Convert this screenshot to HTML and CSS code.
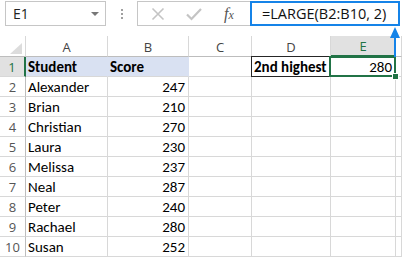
FILE: index.html
```html
<!DOCTYPE html>
<html>
<head>
    <title>LARGE formula</title>
    <link rel="stylesheet" href="styles.css">
</head>
<body>
    <div class="app">
        <div class="formula-bar">
            <div class="name-box">
                <span>E1</span>
                <span class="caret"></span>
            </div>
            <div class="grip"><i></i><i></i><i></i></div>
            <div class="fx-box">
                <svg class="icon" width="14" height="14" viewBox="0 0 14 14">
                    <path d="M1.5 1.5 L12.5 12.5 M12.5 1.5 L1.5 12.5" stroke="#c4c4c4" stroke-width="1.6" fill="none"/>
                </svg>
                <svg class="icon" width="16" height="14" viewBox="0 0 16 14">
                    <path d="M1 7.5 L5.5 12 L15 2" stroke="#c4c4c4" stroke-width="2.2" fill="none"/>
                </svg>
                <span class="fx">f<span class="fx-x">x</span></span>
            </div>
            <div class="formula">=LARGE(B2:B10, 2)</div>
        </div>

        <!-- arrow pointing from E1 to the formula box -->
        <svg class="arrow" width="12" height="31" viewBox="0 0 12 31">
            <path d="M6 1 L11 12 L1 12 Z" fill="#1583e8"/>
            <rect x="5" y="11" width="2" height="20" fill="#1583e8"/>
        </svg>

        <div class="sheet">
            <div class="hdr corner"><span class="tri"></span></div>
            <div class="hdr col">A</div>
            <div class="hdr col">B</div>
            <div class="hdr col">C</div>
            <div class="hdr col">D</div>
            <div class="hdr col active">E</div>
            <div class="hdr col"></div>

            <div class="rh active">1</div>
            <div class="cell bold band">Student</div>
            <div class="cell bold band">Score</div>
            <div class="cell"></div>
            <div class="cell bold boxed">2nd highest</div>
            <div class="cell num selected">280<span class="handle"></span></div>
            <div class="cell"></div>

            <div class="rh">2</div>
            <div class="cell">Alexander</div>
            <div class="cell num">247</div>
            <div class="cell"></div><div class="cell"></div><div class="cell"></div><div class="cell"></div>

            <div class="rh">3</div>
            <div class="cell">Brian</div>
            <div class="cell num">210</div>
            <div class="cell"></div><div class="cell"></div><div class="cell"></div><div class="cell"></div>

            <div class="rh">4</div>
            <div class="cell">Christian</div>
            <div class="cell num">270</div>
            <div class="cell"></div><div class="cell"></div><div class="cell"></div><div class="cell"></div>

            <div class="rh">5</div>
            <div class="cell">Laura</div>
            <div class="cell num">230</div>
            <div class="cell"></div><div class="cell"></div><div class="cell"></div><div class="cell"></div>

            <div class="rh">6</div>
            <div class="cell">Melissa</div>
            <div class="cell num">237</div>
            <div class="cell"></div><div class="cell"></div><div class="cell"></div><div class="cell"></div>

            <div class="rh">7</div>
            <div class="cell">Neal</div>
            <div class="cell num">287</div>
            <div class="cell"></div><div class="cell"></div><div class="cell"></div><div class="cell"></div>

            <div class="rh">8</div>
            <div class="cell">Peter</div>
            <div class="cell num">240</div>
            <div class="cell"></div><div class="cell"></div><div class="cell"></div><div class="cell"></div>

            <div class="rh">9</div>
            <div class="cell">Rachael</div>
            <div class="cell num">280</div>
            <div class="cell"></div><div class="cell"></div><div class="cell"></div><div class="cell"></div>

            <div class="rh">10</div>
            <div class="cell">Susan</div>
            <div class="cell num">252</div>
            <div class="cell"></div><div class="cell"></div><div class="cell"></div><div class="cell"></div>
        </div>
    </div>
</body>
</html>
```

FILE: styles.css
```css
body {
    margin: 0;
    background: #ffffff;
    font-family: "Open Sans", "Noto Sans", sans-serif;
}
.app {
    position: relative;
    width: 402px;
    height: 257px;
    overflow: hidden;
}
.formula-bar {
    display: flex;
    height: 26px;
    padding: 1px 0 0 5px;
    box-sizing: border-box;
}
.name-box {
    width: 101px;
    border: 1px solid #c6c6c6;
    box-sizing: border-box;
    display: flex;
    align-items: center;
    justify-content: space-between;
    padding: 0 6px 0 7px;
    font-size: 14px;
    color: #222;
}
.caret {
    width: 0;
    height: 0;
    border-left: 4px solid transparent;
    border-right: 4px solid transparent;
    border-top: 4px solid #777;
}
.grip {
    width: 31px;
    display: flex;
    flex-direction: column;
    align-items: center;
    justify-content: center;
    gap: 2px;
}
.grip i {
    width: 2px;
    height: 2px;
    background: #a0a0a0;
}
.fx-box {
    width: 113px;
    border: 1px solid #c6c6c6;
    border-right: none;
    box-sizing: border-box;
    display: flex;
    align-items: center;
    padding-left: 13px;
}
.fx-box .icon {
    margin-right: 21px;
}
.fx-box .icon + .icon {
    margin-right: 22px;
}
.fx {
    font-family: "Liberation Serif", serif;
    font-style: italic;
    font-size: 16px;
    color: #555;
}
.fx-x {
    font-size: 12px;
}
.formula {
    flex: 1;
    margin-right: 2px;
    border: 2px solid #1583e8;
    box-sizing: border-box;
    display: flex;
    align-items: center;
    padding-left: 10px;
    font-size: 14.5px;
    color: #111;
}
.arrow {
    position: absolute;
    left: 389px;
    top: 26px;
    z-index: 3;
}
.sheet {
    margin-top: 10px;
    display: grid;
    grid-template-columns: 26px 82px 81px 63px 79px 65px 1fr;
    grid-template-rows: 21px repeat(10, 20px);
    font-family: "Carlito", "Lato", sans-serif;
    font-size: 15px;
    color: #000;
}
.hdr {
    border-right: 1px solid #d8d8d8;
    border-bottom: 1px solid #bdbdbd;
    box-sizing: border-box;
    display: flex;
    align-items: center;
    justify-content: center;
    font-family: "Open Sans", "Noto Sans", sans-serif;
    font-size: 13px;
    color: #444;
    padding-top: 1px;
}
.corner {
    position: relative;
}
.tri {
    position: absolute;
    right: 3px;
    bottom: 2px;
    width: 0;
    height: 0;
    border-left: 12px solid transparent;
    border-bottom: 11px solid #dcdcdc;
}
.hdr.active {
    background: #e1e1e1;
    color: #217346;
    border-bottom: 2px solid #217346;
}
.rh {
    border-right: 1px solid #bdbdbd;
    border-bottom: 1px solid #d8d8d8;
    box-sizing: border-box;
    display: flex;
    align-items: center;
    justify-content: center;
    font-family: "Open Sans", "Noto Sans", sans-serif;
    font-size: 13px;
    color: #555;
}
.rh.active {
    background: #e1e1e1;
    color: #217346;
    border-right: 2px solid #217346;
}
.cell {
    position: relative;
    border-right: 1px solid #d8d8d8;
    border-bottom: 1px solid #d8d8d8;
    box-sizing: border-box;
    display: flex;
    align-items: center;
    padding: 1px 3px 0 2px;
    white-space: nowrap;
}
.num {
    justify-content: flex-end;
}
.bold {
    font-weight: bold;
}
.band {
    background: #d9e1f2;
    border-right-color: #d9e1f2;
}
.boxed::before {
    content: "";
    position: absolute;
    top: -1px;
    left: -1px;
    right: -1px;
    bottom: -1px;
    border: 1px solid #262626;
}
.selected::before {
    content: "";
    position: absolute;
    top: -1px;
    left: -2px;
    right: -1px;
    bottom: -1px;
    border: 2px solid #217346;
}
.handle {
    position: absolute;
    right: -4px;
    bottom: -4px;
    width: 5px;
    height: 5px;
    background: #217346;
    border: 1px solid #fff;
    z-index: 2;
}
```
